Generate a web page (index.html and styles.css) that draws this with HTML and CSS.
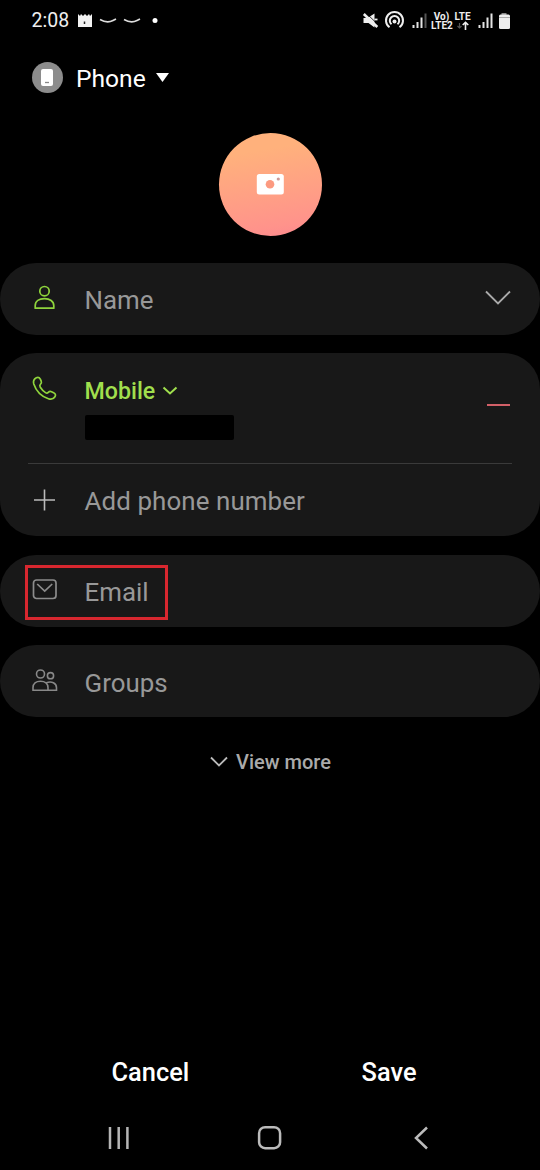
FILE: index.html
```html
<!DOCTYPE html>
<html lang="en">
<head>
<meta charset="utf-8">
<title>Create contact</title>
<link rel="stylesheet" href="styles.css">
</head>
<body>
<div class="screen">
  <header class="status">
    <span class="time">2:08</span>
    <svg class="notices" width="84" height="20" viewBox="76 10 84 20" fill="none">
      <path d="M78 14l2 2 1-2 2 2 2-2 2 2 2-2 1 2 2-2v13H78z" fill="#f2f2f2"/>
      <path d="M84.500 21.500v2.500" stroke="#222" stroke-width="1.500"/>
      <path d="M100 19.500q7 4 13 1l3-1.500M124 19.500q7 4 13 1l3-1.500" stroke="#ddd" stroke-width="1.700"/>
      <circle cx="155" cy="20.500" r="2.500" fill="#fff"/>
    </svg>
    <svg class="signals" width="66" height="22" viewBox="361 10 66 22" fill="none">
      <path d="M363.500 18h4l7-4.500v14l-6-4.500h-5z" fill="#eee"/>
      <path d="M363.800 14l13.500 13" stroke="#eee" stroke-width="2.600"/>
      <path d="M366 13l12 11.500" stroke="#000" stroke-width=".800"/>
      <path d="M374.500 19.500h3" stroke="#eee" stroke-width="1.800"/>
      <g stroke="#eee" stroke-width="2"><path d="M389.500 27.300a8.500 8.500 0 1 1 10 0M391.500 24.300a4.700 4.700 0 1 1 6 0"/></g>
      <circle cx="394.500" cy="21.500" r="2" fill="#eee"/>
      <path d="M413.500 25v3M417.500 22v6M421.500 17.500v10.500" stroke="#e4e4e4" stroke-width="2"/>
      <path d="M425.500 13.500V28" stroke="#555" stroke-width="2"/>
    </svg>
    <span class="net vo">Vo)<br>LTE2</span>
    <span class="net lte">LTE<svg width="14" height="9" viewBox="0 0 14 9" fill="none"><path d="M3.500 2v5M1.500 5l2 2 2-2" stroke="#555" stroke-width="1.200"/><path d="M9.500 9V1.500M6.700 4l2.800-2.700L12.300 4" stroke="#eee" stroke-width="1.600"/></svg></span>
    <svg class="power" width="36" height="22" viewBox="475 10 36 22" fill="none">
      <path d="M477.500 25v3M481.500 22v6M485.500 17.500v10.500M489.500 13.500V28" stroke="#e4e4e4" stroke-width="2"/>
      <path d="M499.500 13h5v2h-5z" fill="#888"/>
      <rect x="497" y="14.500" width="11" height="14.500" rx="1.500" fill="#ededed"/>
      <path d="M497 17.500h11" stroke="#aaa"/>
    </svg>
  </header>

  <div class="account">
    <span class="badge"><svg width="12" height="17" viewBox="0 0 12 17"><rect width="12" height="17" rx="2" fill="#fff"/><path d="M4 13.500h4" stroke="#888" stroke-width="1.300"/></svg></span>
    <span class="account-name">Phone</span>
    <svg width="13" height="9" viewBox="0 0 13 9"><path d="M0 0h13L6.500 9z" fill="#fff"/></svg>
  </div>

  <div class="avatar">
    <svg width="28" height="21" viewBox="0 0 28 21"><rect x=".800" width="27" height="20.500" rx="2.500" fill="#fff"/><circle cx="14" cy="10.200" r="4.300" fill="#fc9a80"/><circle cx="22.300" cy="5" r="1.600" fill="#c99"/></svg>
  </div>

  <main class="cards">
    <section class="card row">
      <svg class="icon" width="28" height="28" viewBox="0 0 28 28" fill="none" stroke="#8fd43c" stroke-width="1.700"><circle cx="14.500" cy="8.200" r="4.700"/><path d="M5.200 25.200v-2.500c0-4.600 4-7 9.300-7s9.300 2.400 9.300 7v2.500z" stroke-linejoin="round"/></svg>
      <span class="label">Name</span>
      <svg class="end" width="28" height="16" viewBox="0 0 28 16" fill="none"><path d="M2 1.500l12 12 12-12" stroke="#aaa" stroke-width="1.800"/></svg>
    </section>

    <section class="card">
      <div class="mobile">
        <svg class="icon" width="28" height="28" viewBox="-.700 -.500 28 28" fill="none" stroke="#8fd43c" stroke-width="1.700" stroke-linejoin="round"><path d="M5.600 3.200c1.800-.9 3.100-.3 4 1.500l.9 2c.6 1.400.2 2.300-.8 3.200-.9.900-.8 1.700-.1 2.900 1.300 2.100 3.200 4 5.200 5.300 1.200.8 1.900.6 2.800-.3.900-.9 1.900-1.200 3.200-.6l2.100 1c1.900.9 2.400 2.300 1.300 4-1.300 2.200-3.700 3-6.500 2-7.300-2.600-12.300-7.700-14.600-14.800-.8-2.700.1-4.900 2.500-6.200z"/></svg>
        <div>
          <div class="type">Mobile<svg width="16" height="10" viewBox="0 0 16 10" fill="none"><path d="M1.500 1.500l6.500 6 6.500-6" stroke="#a0df4d" stroke-width="2"/></svg></div>
          <div class="number"></div>
        </div>
        <span class="remove"></span>
      </div>
      <div class="row add">
        <svg class="icon" width="28" height="28" viewBox="0 0 28 28"><path d="M4 16h21M14.500 5.500v21" stroke="#bbb" stroke-width="1.600"/></svg>
        <span class="label long">Add phone number</span>
      </div>
    </section>

    <section class="card row email">
      <svg class="icon" width="28" height="28" viewBox="0 0 28 28" fill="none" stroke="#8c8c8c" stroke-width="1.700"><rect x="3.500" y="5" width="22.500" height="18.500" rx="3"/><path d="M7.200 9l7.500 7 7.500-7"/></svg>
      <span class="label">Email</span>
      <span class="highlight"></span>
    </section>

    <section class="card row groups">
      <svg class="icon" width="28" height="28" viewBox="0 0 28 28" fill="none" stroke="#888" stroke-width="1.600"><circle cx="10.500" cy="8" r="4"/><circle cx="20.500" cy="9.700" r="3.100"/><path d="M3 24.200v-2.500c0-4 3-6.500 7.500-6.500s7.500 2.500 7.500 6.500v2.500zM16.500 16.800c5-2 10 .4 10 5v2.400H18"/></svg>
      <span class="label">Groups</span>
    </section>
  </main>

  <div class="more"><svg width="18" height="11" viewBox="0 0 18 11" fill="none"><path d="M1 1.500l8 8 8-8" stroke="#bbb" stroke-width="1.800"/></svg><span>View more</span></div>

  <footer>
    <div class="actions"><span class="cancel">Cancel</span><span class="save">Save</span></div>
    <nav>
      <svg width="24" height="26" viewBox="0 0 24 26"><path d="M3 2v22M11.700 2v22M20.400 2v22" stroke="#b5b5b5" stroke-width="2.500"/></svg>
      <svg width="26" height="26" viewBox="2.800 0 26 26" fill="none"><rect x="2.900" y="2.200" width="21" height="21" rx="6" stroke="#bbb" stroke-width="2.500"/></svg>
      <svg width="16" height="26" viewBox="0 0 16 26" fill="none"><path d="M14 2.500L3 13l11 10.500" stroke="#bbb" stroke-width="2.500"/></svg>
    </nav>
  </footer>
</div>
</body>
</html>
```

FILE: styles.css
```css
* { box-sizing: border-box; }
body { margin: 0; background: #000; }
svg { display: block; flex: none; overflow: visible; }
.screen { width: 540px; height: 1170px; display: flex; flex-direction: column; background: #000; color: #fff; font-family: Roboto, sans-serif; }
.status { height: 40px; display: flex; align-items: center; padding-left: 31.5px; color: #eee; }
.time { width: 44.5px; padding-top: 1px; font-size: 19.5px; line-height: 40px; }
.signals { margin: 2px 0 0 201px; }
.net { padding-top: 1px; font-size: 10px; line-height: 9px; font-weight: 700; text-align: center; }
.vo { width: 21px; margin-left: 4px; }
.lte { width: 17px; margin: 0 6px 0 2px; }
.lte svg { margin-left: 2px; }
.power { margin-top: 2px; }
.account { height: 74px; display: flex; align-items: center; padding-left: 31.5px; }
.badge { width: 31px; height: 31px; border-radius: 50%; background: #8c8c8c; display: flex; align-items: center; justify-content: center; }
.account-name { width: 79.5px; margin-left: 13.5px; padding-top: 3px; font-size: 24.6px; line-height: 30px; }
.avatar { width: 103px; height: 103px; margin: 18.5px auto 27px; border-radius: 50%; background: linear-gradient(170deg, #ffb17c 20%, #ff938b 85%, #fc888f); display: flex; align-items: center; justify-content: center; }
.cards { display: flex; flex-direction: column; gap: 18.5px; }
.card { border-radius: 36px; background: #181818; }
.row { height: 72px; display: flex; align-items: center; padding: 0 28px 0 30px; }
.icon { margin: 0 26.5px 4px 0; }
.label { padding-top: 2px; font-size: 25.9px; line-height: 30px; color: #989898; }
.long { letter-spacing: 0.1px; }
.end { margin: 0 0 2px auto; }
.mobile { height: 111px; margin: 0 28px; padding: 21px 2px 0; display: flex; border-bottom: 1px solid #3a3a3a; }
.type { display: flex; align-items: center; gap: 7px; padding-top: 2px; font-size: 23.2px; line-height: 30px; font-weight: 500; color: #a0df4d; }
.number { width: 149px; height: 25px; margin-top: 9px; border-radius: 2px; background: #000; }
.remove { width: 23px; height: 2px; margin: 30px 0 0 auto; background: #d26068; }
.add { height: 72px; }
.email { position: relative; }
.highlight { position: absolute; left: 25px; top: 10px; width: 143px; height: 55px; border: 3px solid #d8272f; }
.groups { padding-top: 1px; }
.more { height: 30px; margin-top: 29.5px; display: flex; align-items: center; gap: 8px; padding-left: 210px; font-size: 20px; font-weight: 500; color: #aaa; }
footer { margin-top: auto; }
.actions { height: 55px; padding: 0 123.5px 0 111.5px; display: flex; justify-content: space-between; font-size: 25.4px; line-height: 30px; font-weight: 500; }
nav { height: 58px; display: flex; justify-content: space-between; padding: 13px 111px 0 107px; }
```
